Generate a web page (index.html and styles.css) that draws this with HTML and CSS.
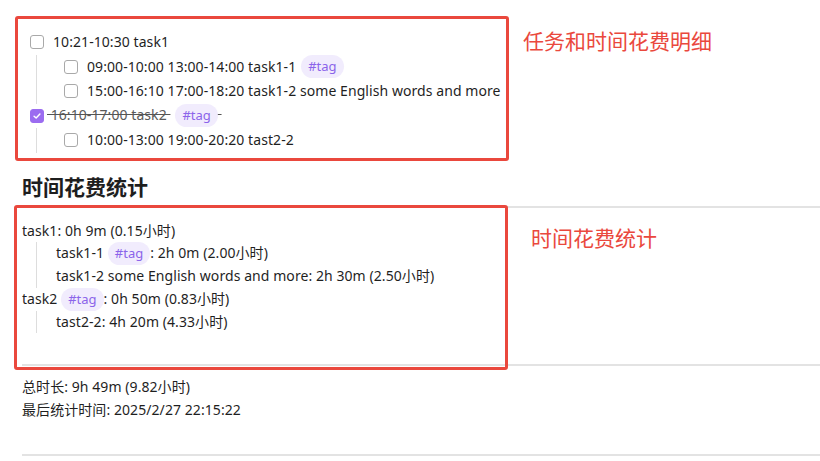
FILE: index.html
```html
<!DOCTYPE html>
<html lang="zh">
<head>
<meta charset="utf-8">
<link rel="stylesheet" href="styles.css">
</head>
<body>
<div class="page">
  <ul class="tasks">
    <li>
      <div class="row"><span class="cb"></span><span class="label">10:21-10:30 task1</span></div>
      <ul class="children">
        <li><div class="row"><span class="cb"></span><span class="label">09:00-10:00 13:00-14:00 task1-1</span><span class="tag">#tag</span></div></li>
        <li><div class="row"><span class="cb"></span><span class="label">15:00-16:10 17:00-18:20 task1-2 some English words and more</span></div></li>
      </ul>
    </li>
    <li>
      <div class="row done"><span class="cb checked"><svg viewBox="0 0 14 14" width="14" height="14"><path d="M3.6 7.2 L6 9.4 L10.4 4.8" fill="none" stroke="#fff" stroke-width="1.7" stroke-linecap="round" stroke-linejoin="round"/></svg></span><span class="label strike">&nbsp;16:10-17:00 task2 <span class="tag">#tag</span>&nbsp;</span></div>
      <ul class="children">
        <li><div class="row"><span class="cb"></span><span class="label">10:00-13:00 19:00-20:20 tast2-2</span></div></li>
      </ul>
    </li>
  </ul>

  <h2 class="heading">时间花费统计</h2>

  <div class="stats">
    <div class="sline">task1: 0h 9m (0.15小时)</div>
    <div class="schildren">
      <div class="sline">task1-1 <span class="tag">#tag</span>: 2h 0m (2.00小时)</div>
      <div class="sline">task1-2 some English words and more: 2h 30m (2.50小时)</div>
    </div>
    <div class="sline">task2 <span class="tag">#tag</span>: 0h 50m (0.83小时)</div>
    <div class="schildren">
      <div class="sline">tast2-2: 4h 20m (4.33小时)</div>
    </div>
  </div>

  <div class="summary">
    <div class="sline">总时长: 9h 49m (9.82小时)</div>
    <div class="sline">最后统计时间: 2025/2/27 22:15:22</div>
  </div>
</div>

<div class="mark mark1"></div>
<div class="note note1">任务和时间花费明细</div>
<div class="mark mark2"></div>
<div class="note note2">时间花费统计</div>
</body>
</html>
```

FILE: styles.css
```css
html, body {
  margin: 0;
  padding: 0;
  background: #fff;
}
body {
  font-family: "Noto Sans", "Noto Sans CJK SC", sans-serif;
  font-size: 14px;
  letter-spacing: 0.07px;
  color: #1f1f1f;
  width: 820px;
  height: 461px;
  overflow: hidden;
  position: relative;
}
.page {
  padding: 30px 0 0 22px;
}
ul {
  list-style: none;
  margin: 0;
  padding: 0;
}
.tasks {
  padding-left: 8px;
}
.row {
  display: flex;
  align-items: center;
  height: 24.5px;
  white-space: nowrap;
}
.cb {
  box-sizing: border-box;
  width: 14px;
  height: 14px;
  border: 1.5px solid #a9a9a9;
  border-radius: 3px;
  flex: none;
  margin-right: 9px;
  display: flex;
  align-items: center;
  justify-content: center;
}
.cb.checked {
  background: #9b6cf0;
  border-color: #9b6cf0;
  margin-right: 3px;
}
.cb.checked svg {
  display: block;
}
.label {
  line-height: 20px;
}
.strike {
  color: #5a5a5a;
  text-decoration: line-through;
  text-decoration-color: #555;
}
.children {
  margin-left: 6px;
  border-left: 1px solid #ddd;
  padding-left: 27px;
}
.tag {
  display: inline-block;
  background: #f1ecfd;
  color: #8b64ea;
  font-size: 13px;
  letter-spacing: 0;
  line-height: 23px;
  padding: 0 7px;
  border-radius: 12px;
  margin-left: 5px;
}
.sline .tag {
  margin: 0;
}
.heading {
  margin: 19px 0 0 0;
  font-family: "Noto Sans CJK SC", sans-serif;
  font-size: 21px;
  letter-spacing: 0;
  font-weight: 700;
  line-height: 28px;
  color: #1e1e1e;
  padding-bottom: 6px;
  border-bottom: 2px solid #e3e3e3;
}
.stats {
  padding: 12px 0 31px 0;
  border-bottom: 2px solid #e3e3e3;
}
.sline {
  line-height: 22.5px;
  white-space: nowrap;
}
.schildren {
  margin-left: 14px;
  border-left: 1px solid #ddd;
  padding-left: 19px;
}
.summary {
  padding: 9px 0 33px 0;
  border-bottom: 2px solid #e3e3e3;
}
.summary .sline {
  line-height: 23px;
}
.mark {
  position: absolute;
  box-sizing: border-box;
  border: 3px solid #ea483d;
  border-radius: 3px;
}
.mark1 {
  left: 15px;
  top: 16px;
  width: 494px;
  height: 145px;
}
.mark2 {
  left: 14px;
  top: 205px;
  width: 494px;
  height: 165px;
}
.note {
  position: absolute;
  color: #ea483d;
  font-family: "Noto Sans CJK SC", sans-serif;
  font-size: 21px;
  letter-spacing: 0;
  line-height: 24px;
}
.note1 {
  left: 523px;
  top: 28px;
}
.note2 {
  left: 531px;
  top: 225px;
}
```
